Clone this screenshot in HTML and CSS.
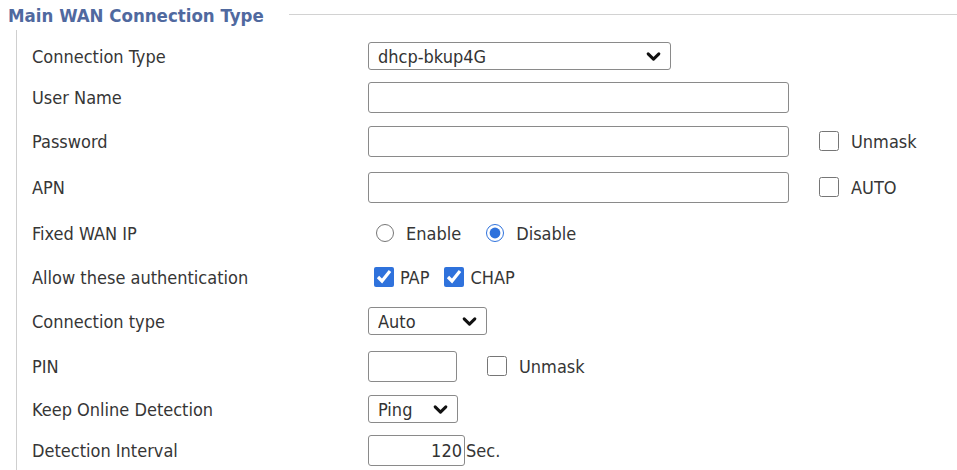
FILE: index.html
```html
<!DOCTYPE html>
<html>
<head>
<meta charset="utf-8">
<link rel="stylesheet" href="styles.css">
</head>
<body>
<div class="page">
  <div class="legend-row">
    <span class="legend">Main WAN Connection Type</span>
    <span class="legend-line"></span>
  </div>
  <div class="fieldset">
    <div class="row r1">
      <span class="label">Connection Type</span>
      <div class="sel-wrap w-dhcp">
        <select class="sel"><option>dhcp-bkup4G</option></select>
        <svg class="chev" viewBox="0 0 14 10"><path d="M2 2.5 L7 7.5 L12 2.5" fill="none" stroke="#111" stroke-width="2.8" stroke-linecap="round" stroke-linejoin="round"/></svg>
      </div>
    </div>
    <div class="row r2">
      <span class="label">User Name</span>
      <input class="txt w-long" type="text">
    </div>
    <div class="row r3">
      <span class="label">Password</span>
      <input class="txt w-long" type="text">
      <label class="opt opt-far"><input class="cb" type="checkbox"><span>Unmask</span></label>
    </div>
    <div class="row r4">
      <span class="label">APN</span>
      <input class="txt w-long" type="text">
      <label class="opt opt-far"><input class="cb" type="checkbox"><span>AUTO</span></label>
    </div>
    <div class="row r5">
      <span class="label">Fixed WAN IP</span>
      <div class="radios">
        <label class="opt"><input class="rb" type="radio" name="fixed"><span>Enable</span></label>
        <label class="opt"><input class="rb" type="radio" name="fixed" checked><span>Disable</span></label>
      </div>
    </div>
    <div class="row r6">
      <span class="label">Allow these authentication</span>
      <div class="checks">
        <label class="opt"><input class="cb" type="checkbox" checked><span>PAP</span></label>
        <label class="opt"><input class="cb" type="checkbox" checked><span>CHAP</span></label>
      </div>
    </div>
    <div class="row r7">
      <span class="label">Connection type</span>
      <div class="sel-wrap w-auto">
        <select class="sel"><option>Auto</option></select>
        <svg class="chev" viewBox="0 0 14 10"><path d="M2 2.5 L7 7.5 L12 2.5" fill="none" stroke="#111" stroke-width="2.8" stroke-linecap="round" stroke-linejoin="round"/></svg>
      </div>
    </div>
    <div class="row r8">
      <span class="label">PIN</span>
      <input class="txt w-pin" type="text">
      <label class="opt opt-pin"><input class="cb" type="checkbox"><span>Unmask</span></label>
    </div>
    <div class="row r9">
      <span class="label">Keep Online Detection</span>
      <div class="sel-wrap w-ping">
        <select class="sel"><option>Ping</option></select>
        <svg class="chev" viewBox="0 0 14 10"><path d="M2 2.5 L7 7.5 L12 2.5" fill="none" stroke="#111" stroke-width="2.8" stroke-linecap="round" stroke-linejoin="round"/></svg>
      </div>
    </div>
    <div class="row r10">
      <span class="label">Detection Interval</span>
      <input class="txt w-int num" type="text" value="120">
      <span class="unit">Sec.</span>
    </div>
  </div>
</div>
</body>
</html>
```

FILE: styles.css
```css
html, body {
  margin: 0;
  padding: 0;
  background: #ffffff;
}

body {
  font-family: "DejaVu Sans Condensed", "DejaVu Sans", sans-serif;
  font-stretch: condensed;
  font-size: 18px;
  color: #363636;
  overflow: hidden;
}

.page {
  width: 957px;
  height: 470px;
}

.legend-row {
  display: flex;
  align-items: center;
  height: 30px;
  padding-left: 8px;
}

.legend {
  font-weight: bold;
  color: #50699f;
  font-size: 18.5px;
  white-space: nowrap;
}

.legend-line {
  flex: 1;
  margin-left: 25px;
  border-top: 1px solid #d2d2d2;
  margin-top: -2px;
}

.fieldset {
  margin-left: 16px;
  border-left: 1px solid #cfcfcf;
  padding-left: 15px;
  padding-top: 5px;
  height: 435px;
}

.row {
  display: flex;
  align-items: center;
}

.r1 { height: 42px; }
.r2 { height: 41px; }
.r3 { height: 46px; }
.r4 { height: 46px; }
.r5 { height: 46px; }
.r6 { height: 42px; }
.r7 { height: 46px; }
.r8 { height: 44px; }
.r9 { height: 42px; }
.r10 { height: 40px; }

.label {
  width: 336px;
  flex: none;
  white-space: nowrap;
}

.txt {
  box-sizing: border-box;
  height: 31px;
  border: 1px solid #8a8a8a;
  border-radius: 3px;
  padding: 0 6px;
  margin: 0;
  font: inherit;
  color: #333;
  background: #fff;
}

.w-long { width: 421px; }
.w-pin { width: 89px; }
.w-int { width: 97px; }
.num { text-align: right; padding-right: 2px; }

.sel-wrap {
  position: relative;
  height: 28px;
}

.sel {
  -webkit-appearance: none;
  appearance: none;
  box-sizing: border-box;
  width: 100%;
  height: 28px;
  border: 1px solid #8a8a8a;
  border-radius: 3px;
  padding: 0 0 0 9px;
  margin: 0;
  font: inherit;
  color: #333;
  background: #fff;
}

.w-dhcp { width: 303px; }
.w-auto { width: 119px; }
.w-ping { width: 90px; }

.chev {
  position: absolute;
  right: 10px;
  top: 9px;
  width: 15px;
  height: 11px;
  pointer-events: none;
}

.opt {
  display: inline-flex;
  align-items: center;
  white-space: nowrap;
}

.opt-far { margin-left: 30px; }
.opt-far span { margin-left: 12px; }

.opt-pin { margin-left: 30px; }
.opt-pin span { margin-left: 12px; }

.cb {
  width: 20px;
  height: 20px;
  margin: 0;
  accent-color: #2f72dc;
}

.rb {
  width: 18px;
  height: 18px;
  margin: 0;
  accent-color: #2f72dc;
}

.radios {
  display: flex;
  align-items: center;
  padding-left: 8px;
  gap: 25px;
}

.radios .opt span { margin-left: 12px; }

.checks {
  display: flex;
  align-items: center;
  padding-left: 6px;
  gap: 15px;
}

.checks .opt span { margin-left: 6px; }

.unit {
  margin-left: 1px;
}
```
